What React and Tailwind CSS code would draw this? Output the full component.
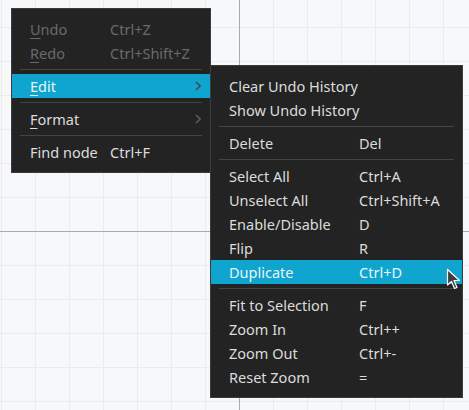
function Sep() {
  return <div className="mx-[8px] my-[4px] h-px bg-[#444444]" />;
}

function Item({ label, mnemonic, shortcut, disabled, active, submenu, labelWidth }) {
  const text = disabled ? "text-[#6a6a6a]" : active ? "text-[#eaf4f8]" : "text-[#dcdcdc]";
  const first = mnemonic ? label.slice(0, 1) : "";
  const rest = mnemonic ? label.slice(1) : label;
  return (
    <div className={`flex h-[24px] items-center pl-[18px] pr-[8px] pt-[2px] ${active ? "bg-[#0fa5cf]" : ""} ${text}`}>
      <span className={`${labelWidth} shrink-0 whitespace-nowrap`}>
        {mnemonic && <span className="underline decoration-1 underline-offset-[3px]">{first}</span>}
        {rest}
      </span>
      <span className="flex-1 whitespace-nowrap">{shortcut}</span>
      {submenu && (
        <svg width="6" height="10" viewBox="0 0 6 10" className="mr-[1px] -mt-[2px]">
          <path d="M1 1 L5 5 L1 9" fill="none" stroke={active ? "#3f4d55" : "#5a5a5a"} strokeWidth="1.6" />
        </svg>
      )}
    </div>
  );
}

export default function App() {
  const main = [
    { label: "Undo", mnemonic: true, shortcut: "Ctrl+Z", disabled: true },
    { label: "Redo", mnemonic: true, shortcut: "Ctrl+Shift+Z", disabled: true },
    "sep",
    { label: "Edit", mnemonic: true, active: true, submenu: true },
    "sep",
    { label: "Format", mnemonic: true, submenu: true },
    "sep",
    { label: "Find node", shortcut: "Ctrl+F" },
  ];
  const edit = [
    { label: "Clear Undo History" },
    { label: "Show Undo History" },
    "sep",
    { label: "Delete", shortcut: "Del" },
    "sep",
    { label: "Select All", shortcut: "Ctrl+A" },
    { label: "Unselect All", shortcut: "Ctrl+Shift+A" },
    { label: "Enable/Disable", shortcut: "D" },
    { label: "Flip", shortcut: "R" },
    { label: "Duplicate", shortcut: "Ctrl+D", active: true },
    "sep",
    { label: "Fit to Selection", shortcut: "F" },
    { label: "Zoom In", shortcut: "Ctrl++" },
    { label: "Zoom Out", shortcut: "Ctrl+-" },
    { label: "Reset Zoom", shortcut: "=" },
  ];

  return (
    <div
      className="relative h-[410px] w-[469px] overflow-hidden bg-[#f7f8fa] bg-[linear-gradient(to_right,#eaebee_1px,transparent_1px),linear-gradient(to_bottom,#eaebee_1px,transparent_1px)] [background-position:1px_27px] [background-size:34px_34px] text-[14.5px] [font-family:'Noto_Sans',sans-serif]"
    >
      {/* canvas axes */}
      <div className="absolute left-[239px] top-0 h-full w-px bg-[#aaaaaa]" />
      <div className="absolute left-0 top-[231px] h-px w-full bg-[#aaaaaa]" />

      {/* main context menu */}
      <div className="absolute left-[11px] top-[8px] w-[200px] border border-[#3b3b3b] bg-[#232323] py-[8px]">
        {main.map((it, i) =>
          it === "sep" ? <Sep key={i} /> : <Item key={i} {...it} labelWidth="w-[80px]" />
        )}
      </div>

      {/* Edit submenu */}
      <div className="absolute left-[210px] top-[65px] w-[253px] border border-[#3b3b3b] bg-[#232323] py-[8px]">
        {edit.map((it, i) =>
          it === "sep" ? <Sep key={i} /> : <Item key={i} {...it} labelWidth="w-[130px]" />
        )}
      </div>

      {/* mouse pointer */}
      <svg className="absolute left-[446px] top-[268px]" width="16" height="24" viewBox="0 0 16 24">
        <path
          d="M1.5 1.5 L1.5 17 L5.5 13.5 L8.5 20.5 L11 19.5 L8 12.5 L13.5 12.5 Z"
          fill="#3d3d3d"
          stroke="#ffffff"
          strokeWidth="1.2"
          strokeLinejoin="round"
        />
      </svg>
    </div>
  );
}
